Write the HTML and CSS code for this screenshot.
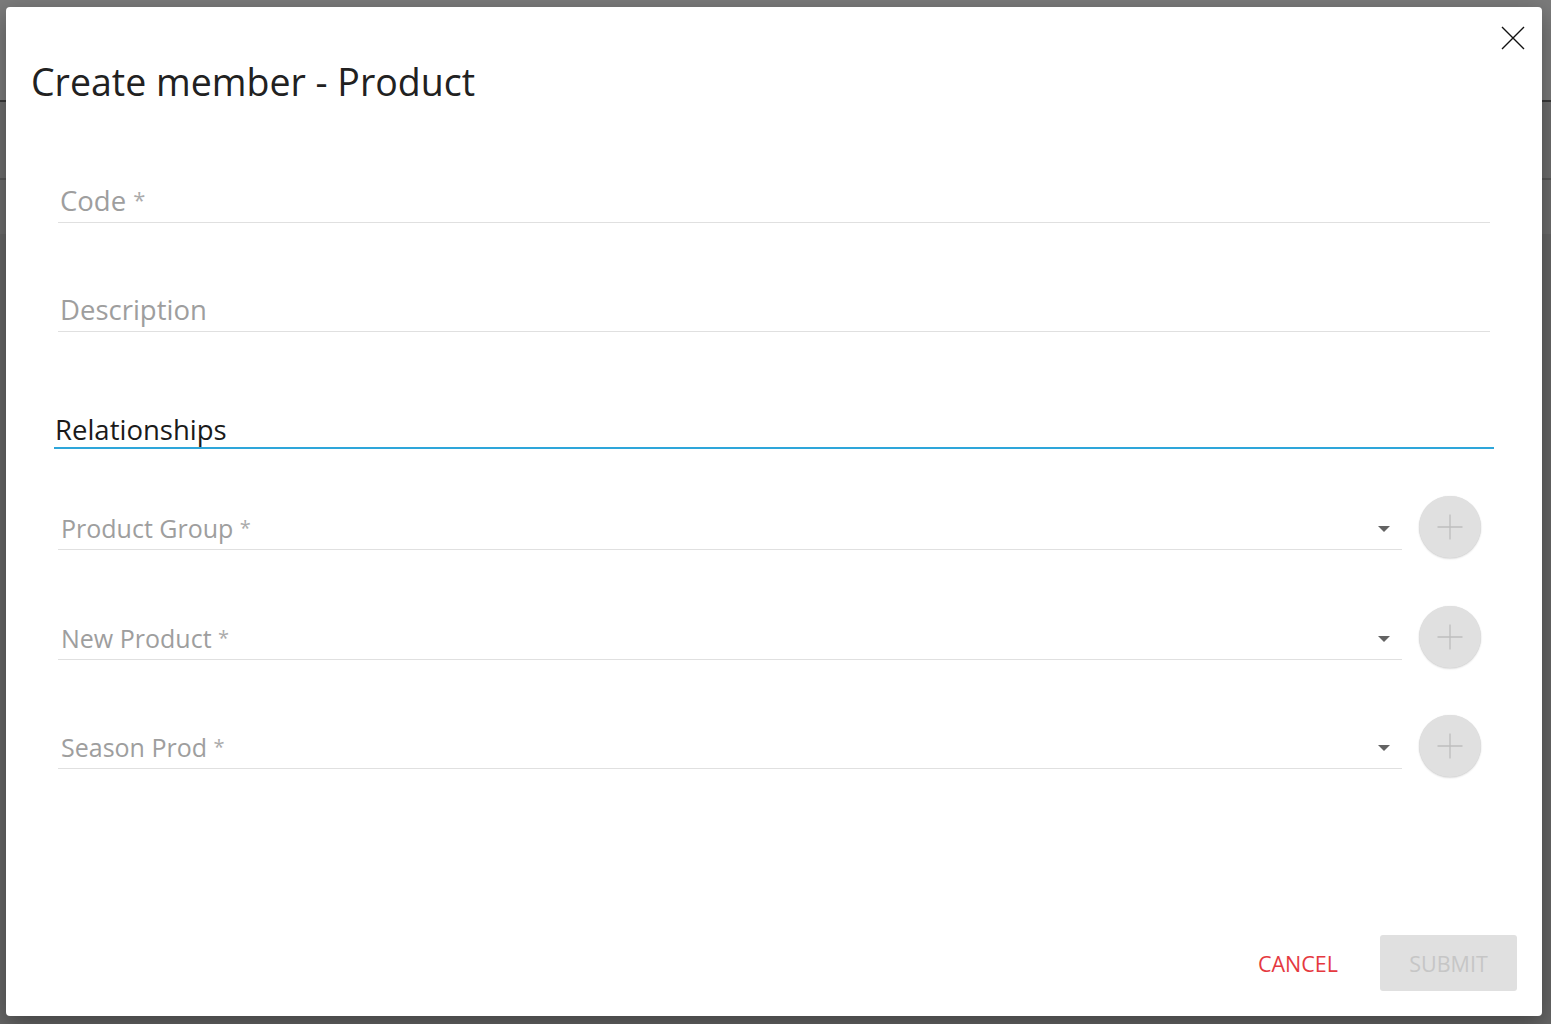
FILE: index.html
```html
<!DOCTYPE html>
<html lang="en">
<head>
<meta charset="utf-8">
<title>Create member - Product</title>
<link rel="stylesheet" href="styles.css">
</head>
<body>
<div class="backdrop"></div>
<div class="modal" role="dialog">
  <button class="close" aria-label="Close">
    <svg width="24" height="24" viewBox="0 0 24 24"><path d="M1 1L23 23M23 1L1 23" stroke="#111" stroke-width="1.4" fill="none"/></svg>
  </button>
  <header class="modal-header">
    <h1 class="title">Create member - Product</h1>
  </header>
  <div class="form">
    <div class="field field-code"><span class="label">Code <span class="req">*</span></span></div>
    <div class="field field-desc"><span class="label">Description</span></div>
    <div class="section"><span class="section-title">Relationships</span></div>
    <div class="rows">
      <div class="row">
        <div class="select"><span class="label small">Product Group <span class="req">*</span></span><span class="arrow"></span></div>
        <button class="add" aria-label="Add"><svg width="26" height="26" viewBox="0 0 26 26"><path d="M13 0.5V25.5M0.5 13H25.5" stroke="#bdbdbd" stroke-width="1.3" fill="none"/></svg></button>
      </div>
      <div class="row">
        <div class="select"><span class="label small">New Product <span class="req">*</span></span><span class="arrow"></span></div>
        <button class="add" aria-label="Add"><svg width="26" height="26" viewBox="0 0 26 26"><path d="M13 0.5V25.5M0.5 13H25.5" stroke="#bdbdbd" stroke-width="1.3" fill="none"/></svg></button>
      </div>
      <div class="row">
        <div class="select"><span class="label small">Season Prod <span class="req">*</span></span><span class="arrow"></span></div>
        <button class="add" aria-label="Add"><svg width="26" height="26" viewBox="0 0 26 26"><path d="M13 0.5V25.5M0.5 13H25.5" stroke="#bdbdbd" stroke-width="1.3" fill="none"/></svg></button>
      </div>
    </div>
  </div>
  <footer class="footer">
    <button class="btn cancel">Cancel</button>
    <button class="btn submit" disabled>Submit</button>
  </footer>
</div>
</body>
</html>
```
FILE: styles.css
```css
html, body {
  margin: 0;
  height: 100%;
}
body {
  font-family: "Open Sans", "Noto Sans", sans-serif;
  background: #666;
  overflow: hidden;
}
.backdrop {
  position: fixed;
  inset: 0;
  background: linear-gradient(to bottom,
    #7b7b7b 0, #7b7b7b 100px,
    #3a3a3a 100px, #3a3a3a 102px,
    #6e6e6e 102px, #6e6e6e 178px,
    #585858 178px, #585858 180px,
    #6d6d6d 180px, #6d6d6d 234px,
    #666 234px, #666 100%);
}
.modal {
  position: fixed;
  top: 7px;
  left: 6px;
  right: 9px;
  bottom: 8px;
  background: #fff;
  border-radius: 4px;
  box-shadow: 0 8px 24px rgba(0,0,0,0.35);
  display: flex;
  flex-direction: column;
}
.close {
  position: absolute;
  top: 19px;
  right: 17px;
  width: 24px;
  height: 24px;
  padding: 0;
  border: 0;
  background: none;
  display: flex;
}
.modal-header {
  padding: 53px 24px 0 25px;
}
.title {
  margin: 0;
  font-size: 37.5px;
  line-height: 44px;
  font-weight: 400;
  color: #212121;
}
.form {
  padding: 0 52px;
  display: flex;
  flex-direction: column;
}
.field {
  border-bottom: 1px solid #e0e0e0;
  padding-bottom: 8px;
}
.field-code { margin-top: 83px; }
.field-desc { margin-top: 73px; }
.label {
  display: block;
  font-size: 27.5px;
  line-height: 27px;
  height: 27px;
  color: #9e9e9e;
  padding-left: 2px;
}
.label.small {
  font-size: 25px;
  line-height: 25px;
  height: 25px;
  padding-left: 3px;
}
.req {
  font-size: 0.8em;
  line-height: 0;
  color: #ababab;
  vertical-align: 3px;
}
.section {
  margin: 85px -4px 0;
  border-bottom: 2px solid #2ea6da;
  padding-bottom: 3px;
}
.section-title {
  display: block;
  font-size: 27.5px;
  line-height: 27px;
  color: #1a1a1a;
  margin-left: 1px;
  margin-top: -1px;
  padding-bottom: 1px;
}
.rows {
  margin-top: 47px;
  display: flex;
  flex-direction: column;
  gap: 47.5px;
  padding-right: 9px;
}
.row {
  display: flex;
  align-items: flex-start;
  gap: 17px;
}
.select {
  flex: 1;
  position: relative;
  padding-top: 20px;
  padding-bottom: 8px;
  border-bottom: 1px solid #e0e0e0;
}
.arrow {
  position: absolute;
  right: 12px;
  top: 30px;
  width: 0;
  height: 0;
  border-left: 6.5px solid transparent;
  border-right: 6.5px solid transparent;
  border-top: 6px solid #636363;
}
.add {
  width: 62px;
  height: 62px;
  border-radius: 50%;
  border: 0;
  padding: 0;
  background: #e0e0e0;
  box-shadow: 0 1px 2px rgba(0,0,0,0.14), 0 0 1px rgba(0,0,0,0.12);
  display: flex;
  align-items: center;
  justify-content: center;
}
.footer {
  margin-top: auto;
  padding: 0 25px 25px;
  display: flex;
  justify-content: flex-end;
  align-items: center;
}
.btn {
  font-family: "Open Sans", "Noto Sans", sans-serif;
  font-size: 21.5px;
  text-transform: uppercase;
  height: 56px;
  border: 0;
  border-radius: 3px;
  background: none;
  padding: 0 16px;
}
.cancel {
  color: #e5393f;
  margin-right: 26px;
}
.submit {
  background: #e0e0e0;
  color: #c6c6c6;
  width: 137px;
  padding: 0;
}
```
